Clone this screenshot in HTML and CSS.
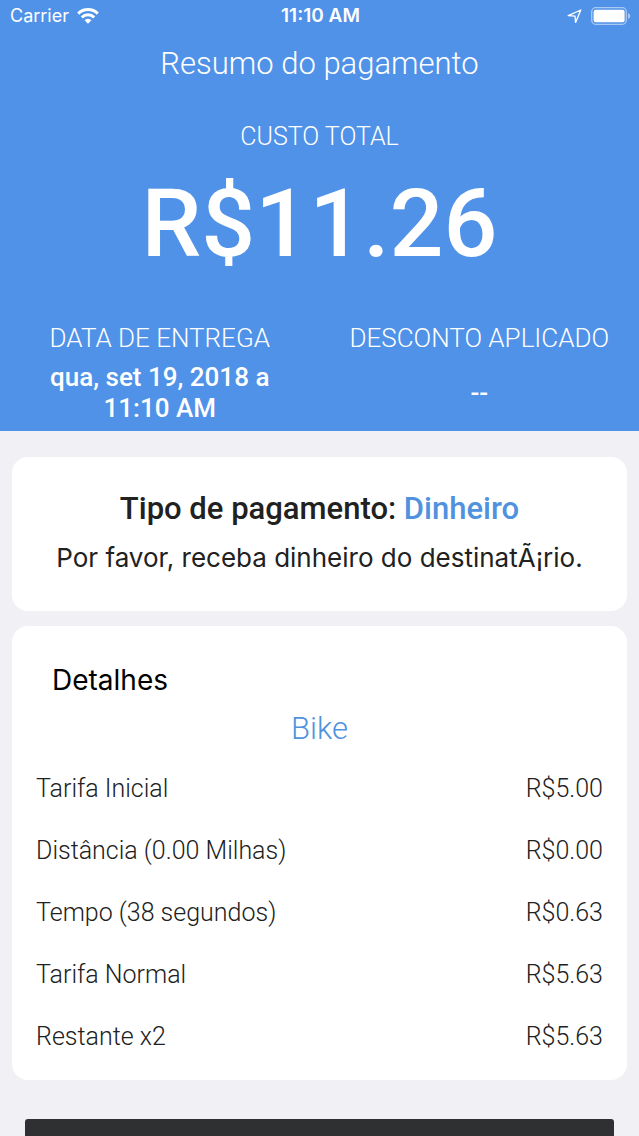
FILE: index.html
```html
<!DOCTYPE html>
<html lang="pt">
<head>
<meta charset="utf-8">
<meta name="viewport" content="width=device-width, initial-scale=1">
<title>Resumo do pagamento</title>
<link rel="stylesheet" href="styles.css">
</head>
<body>
<header class="summary">
  <div class="status">
    <div class="carrier">Carrier
      <svg class="wifi" viewBox="0 0 22 16" aria-hidden="true"><g fill="none" stroke="#fff" stroke-width="3"><path d="M1.2 5.6a14 14 0 0 1 19.6 0"/><path d="M4.8 9.3a9 9 0 0 1 12.4 0"/></g><path d="M7.6 12.2a5.2 5.2 0 0 1 6.8 0L11 15.8z" fill="#fff"/></svg>
    </div>
    <div class="clock">11:10 AM</div>
    <div class="indicators">
      <svg class="location" viewBox="0 0 15 15" aria-hidden="true"><path d="M13.8 1 8.6 13.4 8 7.2 1.2 6.6z" fill="none" stroke="#fff" stroke-width="1.3" stroke-linejoin="round"/></svg>
      <svg class="battery" viewBox="0 0 40 18" aria-hidden="true"><rect x=".7" y=".7" width="34.6" height="16.6" rx="4" fill="none" stroke="#fff" stroke-opacity=".5" stroke-width="1.3"/><rect x="2.6" y="2.8" width="31" height="12.4" rx="2" fill="#fff"/><path d="M37 6q2.4 1 2.4 3T37 12z" fill="#fff" fill-opacity=".5"/></svg>
    </div>
  </div>
  <h1 class="title">Resumo do pagamento</h1>
  <p class="total-label">CUSTO TOTAL</p>
  <p class="total">R$11.26</p>
  <div class="facts">
    <section class="fact"><h2 class="fact-label">DATA DE ENTREGA</h2><p class="fact-value">qua, set 19, 2018 a<br>11:10 AM</p></section>
    <section class="fact"><h2 class="fact-label">DESCONTO APLICADO</h2><p class="fact-value">--</p></section>
  </div>
</header>
<main class="content">
  <section class="card payment">
    <h2 class="payment-type">Tipo de pagamento: <span class="accent">Dinheiro</span></h2>
    <p class="payment-note">Por favor, receba dinheiro do destinatÃ¡rio.</p>
  </section>
  <section class="card details">
    <h2 class="details-title">Detalhes</h2>
    <p class="vehicle">Bike</p>
    <dl class="fares">
      <div class="fare"><dt>Tarifa Inicial</dt><dd>R$5.00</dd></div>
      <div class="fare"><dt>Distância (0.00 Milhas)</dt><dd>R$0.00</dd></div>
      <div class="fare"><dt>Tempo (38 segundos)</dt><dd>R$0.63</dd></div>
      <div class="fare"><dt>Tarifa Normal</dt><dd>R$5.63</dd></div>
      <div class="fare"><dt>Restante x2</dt><dd>R$5.63</dd></div>
    </dl>
  </section>
</main>
<div class="bottom-bar"></div>
</body>
</html>
```

FILE: styles.css
```css
* { box-sizing: border-box; margin: 0; padding: 0; }
body { background: #f1f0f4; color: #212121; font-family: Roboto, sans-serif; }
.summary { background: #5092e8; color: #fff; text-align: center; padding-bottom: 7px; }
.status { display: grid; grid-template-columns: 1fr auto 1fr; align-items: center; height: 32px; padding: 0 8px 0 10px; font: 18px/32px Inter, sans-serif; }
.carrier { display: flex; align-items: center; gap: 8px; }
.wifi { width: 22px; height: 16px; }
.clock { font-size: 19px; font-weight: 600; }
.indicators { display: flex; align-items: center; justify-content: flex-end; gap: 9px; }
.location { width: 15px; height: 15px; }
.battery { width: 40px; height: 18px; }
.title { font-size: 31px; line-height: 64px; font-weight: 300; }
.total-label { font-size: 25px; line-height: 32px; font-weight: 300; padding-top: 25px; }
.total { font-size: 95px; line-height: 142px; font-weight: 500; }
.facts { display: grid; grid-template-columns: 1fr 1fr; padding-top: 27px; }
.fact { display: flex; flex-direction: column; }
.fact-label { font-size: 26px; line-height: 32px; font-weight: 300; padding-bottom: 8px; }
.fact-value { flex: 1; display: grid; align-content: center; font-size: 26px; line-height: 31px; font-weight: 500; }
.content { display: grid; gap: 15px; padding: 26px 12px 39px; }
.card { background: #fff; border-radius: 16px; }
.payment { text-align: center; padding: 32px 12px; }
.payment-type { font-size: 31px; line-height: 40px; font-weight: 500; }
.accent { color: #5092de; }
.payment-note { font: 26px/42px Inter, sans-serif; padding-top: 8px; }
.details { padding: 33px 24px 12px; }
.details-title { color: #000; font: 28px/42px Inter, sans-serif; padding-left: 16px; }
.vehicle { color: #5092de; font-size: 31px; line-height: 56px; font-weight: 300; text-align: center; padding-bottom: 1px; }
.fare { display: flex; justify-content: space-between; gap: 16px; font-size: 25px; line-height: 62px; font-weight: 300; }
.bottom-bar { height: 17px; margin: 0 25px; background: #2e3032; border-radius: 3px 3px 0 0; }
```
